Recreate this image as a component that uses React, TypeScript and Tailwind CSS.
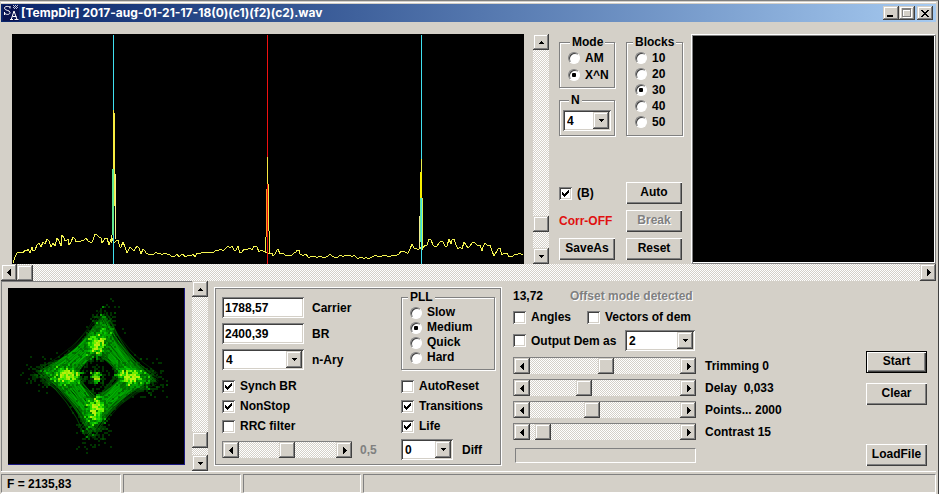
import { useState } from 'react';
import type { ReactNode } from 'react';
import clsx from 'clsx';

const SUNKEN =
  'shadow-[inset_1px_1px_#808080,inset_-1px_-1px_#fff,inset_2px_2px_#404040,inset_-2px_-2px_#d4d0c8]';
const RAISED =
  'bg-[#d4d0c8] shadow-[inset_-1px_-1px_#404040,inset_1px_1px_#d4d0c8,inset_-2px_-2px_#808080,inset_2px_2px_#fff]';
const ETCHED = 'border border-[#808080] shadow-[1px_1px_#fff,inset_1px_1px_#fff]';
const DITHER =
  'bg-[conic-gradient(#fff_25%,#d4d0c8_0_50%,#fff_0_75%,#d4d0c8_0)] bg-[length:2px_2px]';
const THUMB =
  '[&::-webkit-slider-thumb]:appearance-none [&::-webkit-slider-thumb]:size-4 [&::-webkit-slider-thumb]:bg-[#d4d0c8] [&::-webkit-slider-thumb]:shadow-[inset_-1px_-1px_#404040,inset_1px_1px_#d4d0c8,inset_-2px_-2px_#808080,inset_2px_2px_#fff]';

function makeRandom(seed: number) {
  let s = seed;
  return () => {
    s = (s * 1664525 + 1013904223) % 4294967296;
    return s / 4294967296;
  };
}

type Point = [number, number];

// noise floor anchors, x 0..512, y 0..230
const FLOOR: Point[] = [
  [1, 229], [5, 219], [11, 219], [16, 215], [21, 217], [25, 211], [29, 213], [35, 205], [39, 213],
  [41, 209], [43, 212], [45, 204], [49, 212], [50, 201], [53, 207], [56, 205], [57, 211], [61, 203],
  [64, 208], [70, 206], [76, 207], [81, 206], [85, 201], [90, 209], [93, 204], [97, 211], [100, 204],
  [104, 207], [106, 206], [109, 213], [111, 208], [116, 217], [123, 215], [134, 219], [145, 219],
  [155, 220], [161, 222], [175, 222], [188, 220], [200, 218], [210, 216], [218, 214], [222, 216],
  [226, 212], [230, 218], [236, 215], [245, 213], [249, 216], [253, 218], [258, 219], [261, 222],
  [266, 215], [268, 220], [278, 221], [285, 216], [288, 220], [298, 223], [320, 222], [340, 223],
  [360, 223], [375, 222], [385, 221], [391, 217], [396, 219], [400, 210], [403, 214], [408, 213],
  [411, 214], [415, 211], [419, 206], [423, 213], [429, 207], [433, 212], [440, 206], [448, 213],
  [454, 211], [460, 209], [466, 212], [471, 213], [476, 211], [483, 220], [486, 215], [491, 220],
  [501, 222], [511, 221],
];

function buildFloor() {
  const rand = makeRandom(11);
  const out: string[] = [];
  for (let i = 0; i < FLOOR.length - 1; i++) {
    const [x0, y0] = FLOOR[i];
    const [x1, y1] = FLOOR[i + 1];
    out.push(`${x0},${y0}`);
    for (let x = x0 + 2; x < x1; x += 2) {
      const jitter = y0 > 217 ? 4 : 8;
      out.push(`${x},${Math.round(y0 + ((y1 - y0) * (x - x0)) / (x1 - x0) + (rand() - 0.5) * jitter)}`);
    }
  }
  out.push('511,221');
  return out.join(' ');
}

const floorPoints = buildFloor();

function Spectrum() {
  return (
    <svg
      viewBox="0 0 512 230"
      preserveAspectRatio="none"
      shapeRendering="crispEdges"
      className="h-[230px] min-w-0 flex-1 bg-black"
      role="img"
      aria-label="Spectrum"
    >
      <polyline points={floorPoints} fill="none" stroke="#f4f450" strokeWidth="1" />
      <path d="M101 1h1v229h-1z" fill="#40e0f0" />
      <path d="M255 1h1v229h-1z" fill="#f01010" />
      <path d="M409 1h1v229h-1z" fill="#40e0f0" />

      <path d="M101 76h1v3h1v61h-2z" fill="#f8ec40" />
      <path d="M101 135h2v37h-2z" fill="#f8ec40" />
      <path d="M100 135h2v66h-2z" fill="#60e890" />
      <path d="M103 140h1v65h-1z" fill="#f0f090" />
      <path d="M99 201h1v8h-1z" fill="#f0f060" />

      <path d="M255 123h1v27h-1z" fill="#f8e840" />
      <path d="M256 150h1v47h-1z" fill="#f8e840" />
      <path d="M254 155h1v48h-1z" fill="#f89820" />
      <path d="M253 203h1v15h-1z" fill="#f8e840" />
      <path d="M257 197h1v22h-1z" fill="#f8e840" />

      <path d="M409 125h1v13h-1z" fill="#e8f050" />
      <path d="M408 138h2v26h-2z" fill="#f8f000" />
      <path d="M408 164h1v44h-1z" fill="#60e890" />
      <path d="M410 164h1v50h-1z" fill="#d0f050" />
      <path d="M407 182h1v32h-1z" fill="#f0f090" />
    </svg>
  );
}

const CENTER = 88;
const CLUSTERS = [
  { at: [88, 58], tip: [98, 24] },
  { at: [119, 87], tip: [148, 94] },
  { at: [87, 118], tip: [82, 150] },
  { at: [61, 87], tip: [27, 84] },
];
const SHADES = ['#005400', '#007c00', '#00a400', '#08c800', '#28e800', '#50f800', '#80ff00', '#b0ff00', '#d8ff10'];

function buildConstellation() {
  const rand = makeRandom(2017);
  const gauss = () => rand() + rand() + rand() + rand() - 2;
  const hits = new Map<string, number>();
  const hit = (x: number, y: number) => {
    const key = `${Math.round(x / 2) * 2} ${Math.round(y / 2) * 2}`;
    hits.set(key, (hits.get(key) ?? 0) + 1);
  };

  CLUSTERS.forEach(({ at, tip }) => {
    for (let i = 0; i < 480; i++) {
      const t = gauss() * 0.28 + 0.05;
      hit(
        at[0] + (tip[0] - at[0]) * t + gauss() * 8,
        at[1] + (tip[1] - at[1]) * t + gauss() * 8,
      );
    }
    for (let i = 0; i < 330; i++) {
      const t = rand() ** 1.6;
      const spread = 15 - t * 4;
      hit(
        at[0] + (tip[0] - at[0]) * t + gauss() * spread,
        at[1] + (tip[1] - at[1]) * t + gauss() * spread,
      );
    }
  });
  for (let i = 0; i < 120; i++) hit(CENTER + gauss() * 5, CENTER + gauss() * 5);
  for (let i = 0; i < 50; i++) hit(CENTER + gauss() * 12, CENTER + gauss() * 12);

  const dots = SHADES.map(() => '');
  hits.forEach((n, key) => {
    dots[Math.min(n, SHADES.length) - 1] += `M${key}h2v2h-2z`;
  });

  // each trail runs from one cluster to the next, bowed towards the middle
  const trails: string[] = [];
  CLUSTERS.forEach(({ at, tip }, i) => {
    const next = CLUSTERS[(i + 1) % 4];
    for (let k = 0; k < 170; k++) {
      const a = rand() ** 1.3 * 0.95 - 0.1;
      const b = Math.max(-0.1, Math.min(0.85, a + gauss() * 0.25));
      const x0 = at[0] + (tip[0] - at[0]) * a + gauss() * 6;
      const y0 = at[1] + (tip[1] - at[1]) * a + gauss() * 6;
      const x1 = next.at[0] + (next.tip[0] - next.at[0]) * b + gauss() * 6;
      const y1 = next.at[1] + (next.tip[1] - next.at[1]) * b + gauss() * 6;
      const bow = 0.02 + Math.max(0, a) * 0.26;
      const qx = (x0 + x1) / 2 + (CENTER - (x0 + x1) / 2) * bow;
      const qy = (y0 + y1) / 2 + (CENTER - (y0 + y1) / 2) * bow;
      trails.push(`M${x0.toFixed(1)} ${y0.toFixed(1)}Q${qx.toFixed(1)} ${qy.toFixed(1)} ${x1.toFixed(1)} ${y1.toFixed(1)}`);
    }
  });
  return { dots, trails };
}

const constellation = buildConstellation();

function Constellation() {
  return (
    <svg
      viewBox="0 0 176 176"
      className="box-content size-44 border-r border-b border-[#1c1880] bg-black"
      role="img"
      aria-label="Constellation"
    >
      <g fill="none" stroke="#00c800" strokeOpacity="0.2">
        {constellation.trails.map((d) => (
          <path key={d} d={d} />
        ))}
      </g>
      <g shapeRendering="crispEdges">
        {constellation.dots.map((d, i) => (
          <path key={SHADES[i]} d={d} fill={SHADES[i]} fillOpacity={i < 2 ? 0.6 : 0.85} />
        ))}
      </g>
    </svg>
  );
}

const ARROWS = {
  up: 'M3 0h1v1h1v1h1v1h-5v-1h1v-1h1z',
  down: 'M1 0h5v1h-1v1h-1v1h-1v-1h-1v-1h-1z',
  left: 'M3 0h1v7h-1v-1h-1v-1h-1v-1h-1v-1h1v-1h1v-1h1z',
  right: 'M1 0h1v1h1v1h1v1h1v1h-1v1h-1v1h-1v1h-1z',
};

function Arrow({ dir }: { dir: keyof typeof ARROWS }) {
  const flat = dir === 'up' || dir === 'down';
  return (
    <svg viewBox={flat ? '0 0 7 3' : '0 0 5 7'} className={flat ? 'h-[3px] w-[7px]' : 'h-[7px] w-[5px]'} shapeRendering="crispEdges" aria-hidden="true">
      <path d={ARROWS[dir]} />
    </svg>
  );
}

function ScrollBar({ label, value, vertical, framed, className }: {
  label: string;
  value: number;
  vertical?: boolean;
  framed?: boolean;
  className?: string;
}) {
  const [pos, setPos] = useState(value);
  const end = clsx('flex shrink-0 items-center justify-center', RAISED, vertical ? 'h-4 w-full' : 'h-full w-4');
  return (
    <div
      className={clsx(
        'flex',
        DITHER,
        vertical ? 'w-4 flex-col' : 'h-[17px]',
        framed && 'border-t border-l border-[#808080]',
        className,
      )}
    >
      <button type="button" aria-label={`${label} back`} className={end} onClick={() => setPos(Math.max(0, pos - 1))}>
        <Arrow dir={vertical ? 'up' : 'left'} />
      </button>
      <input
        type="range"
        aria-label={label}
        value={pos}
        onChange={(e) => setPos(Number(e.target.value))}
        className={clsx(
          'm-0 block min-h-0 min-w-0 flex-1 appearance-none bg-transparent',
          THUMB,
          vertical ? 'w-full [writing-mode:vertical-lr]' : 'h-full',
        )}
      />
      <button type="button" aria-label={`${label} forward`} className={end} onClick={() => setPos(Math.min(100, pos + 1))}>
        <Arrow dir={vertical ? 'down' : 'right'} />
      </button>
    </div>
  );
}

function Radio({ name, label, checked }: { name: string; label: string; checked?: boolean }) {
  return (
    <label className="flex items-center gap-[5px]">
      <span className="grid place-items-center">
        <input
          type="radio"
          name={name}
          defaultChecked={checked}
          className="peer col-start-1 row-start-1 size-3 appearance-none rounded-full border border-t-[#808080] border-r-white border-b-white border-l-[#808080] bg-white shadow-[inset_1px_1px_#404040]"
        />
        <span className="pointer-events-none col-start-1 row-start-1 hidden size-1 rounded-[1px] bg-black peer-checked:block" />
      </span>
      {label}
    </label>
  );
}

function Check({ label, checked, className }: { label: string; checked?: boolean; className?: string }) {
  return (
    <label className={clsx('flex items-center gap-[5px]', className)}>
      <span className="grid place-items-center">
        <input
          type="checkbox"
          defaultChecked={checked}
          className={clsx('peer col-start-1 row-start-1 size-[13px] appearance-none bg-white', SUNKEN)}
        />
        <svg
          viewBox="0 0 7 7"
          shapeRendering="crispEdges"
          className="pointer-events-none col-start-1 row-start-1 hidden size-[7px] peer-checked:block"
          aria-hidden="true"
        >
          <path d="M0 2h1v1h1v1h1v-1h1v-1h1v-1h1v-1h1v3h-1v1h-1v1h-1v1h-1v1h-1v-1h-1v-1h-1z" />
        </svg>
      </span>
      {label}
    </label>
  );
}

function Select({ id, label, value, options, className }: {
  id: string;
  label?: string;
  value: string;
  options: string[];
  className?: string;
}) {
  return (
    <span className={clsx('grid', className)}>
      <select
        id={id}
        aria-label={label}
        defaultValue={value}
        className={clsx('col-start-1 row-start-1 h-[21px] w-full appearance-none bg-white pl-1', SUNKEN)}
      >
        {options.map((o) => (
          <option key={o}>{o}</option>
        ))}
      </select>
      <span className={clsx('pointer-events-none col-start-1 row-start-1 mr-0.5 flex h-[17px] w-4 items-center justify-center self-center justify-self-end', RAISED)}>
        <Arrow dir="down" />
      </span>
    </span>
  );
}

function Group({ title, className, children }: { title: string; className?: string; children: ReactNode }) {
  return (
    <fieldset className={clsx('min-w-0', ETCHED, className)}>
      <legend className="bg-[#d4d0c8] px-0.5">{title}</legend>
      {children}
    </fieldset>
  );
}

function Button({ children, disabled, main, className }: {
  children: ReactNode;
  disabled?: boolean;
  main?: boolean;
  className?: string;
}) {
  return (
    <button
      type="button"
      disabled={disabled}
      className={clsx(
        'h-[22px] bg-[#d4d0c8] pb-0.5 disabled:text-[#808080] disabled:[text-shadow:1px_1px_#fff]',
        main
          ? 'border border-black shadow-[inset_1px_1px_#fff,inset_-1px_-1px_#404040,inset_-2px_-2px_#808080]'
          : 'shadow-[inset_1px_1px_#fff,inset_-1px_-1px_#404040,inset_-2px_-2px_#808080]',
        className,
      )}
    >
      {children}
    </button>
  );
}

function TitleBar() {
  const box = clsx('flex h-3.5 w-4 items-center justify-center', RAISED);
  return (
    <header className="flex h-[18px] items-center bg-linear-to-r from-[#0a246a] to-[#a6caf0] pr-[3px] pl-0.5 text-white">
      <svg viewBox="0 0 16 16" className="size-4 bg-[#0a1450]" aria-hidden="true">
        <g fill="none" stroke="#fff">
          <path d="M7 3.5V1M7 2.5C6 1 1.500 .8 1.500 3.200C1.500 5.800 7 4.800 7 7.500C7 10.200 2.500 9.800 1.500 8M1.500 10V7" />
          <path d="M7 14.500h3M11.500 14.500h4M8.200 14.500L11 6l3 8.500M9.500 11.500h4" />
        </g>
        <path
          d="M10 0h1v1h-1zM12 0h1v1h-1zM14 0h1v1h-1zM11 1h1v1h-1zM13 1h1v1h-1zM10 2h1v1h-1zM12 2h1v1h-1zM14 2h1v1h-1zM11 3h1v1h-1zM13 3h1v1h-1z"
          fill="#c0c8e0"
          shapeRendering="crispEdges"
        />
      </svg>
      <h1 className="ml-0.5 min-w-0 flex-1 truncate font-['Inter',sans-serif] text-[12px] leading-[18px] font-bold">
        [TempDir] 2017-aug-01-21-17-18(0)(c1)(f2)(c2).wav
      </h1>
      <button type="button" aria-label="Minimize" className={box}>
        <svg viewBox="0 0 8 8" className="size-2" aria-hidden="true">
          <path d="M0 6h6v2h-6z" fill="#000" />
        </svg>
      </button>
      <button type="button" aria-label="Maximize" disabled className={box}>
        <svg viewBox="0 0 10 10" className="size-2.5" shapeRendering="crispEdges" aria-hidden="true">
          <path d="M1 1h9v9h-9zM2 3v6h7v-6z" fill="#fff" fillRule="evenodd" />
          <path d="M0 0h9v9h-9zM1 2v6h7v-6z" fill="#808080" fillRule="evenodd" />
        </svg>
      </button>
      <button type="button" aria-label="Close" className={clsx(box, 'ml-0.5')}>
        <svg viewBox="0 0 8 7" className="h-[7px] w-2" shapeRendering="crispEdges" aria-hidden="true">
          <path d="M0 0h2v1h1v1h2v-1h1v-1h2v1h-1v1h-1v1h-1v1h1v1h1v1h1v1h-2v-1h-1v-1h-2v1h-1v1h-2v-1h1v-1h1v-1h1v-1h-1v-1h-1v-1h-1z" />
        </svg>
      </button>
    </header>
  );
}

const SLIDERS = [
  { name: 'Trimming', text: 'Trimming 0', value: 51 },
  { name: 'Delay', text: 'Delay  0,033', value: 34 },
  { name: 'Points', text: 'Points... 2000', value: 40 },
  { name: 'Contrast', text: 'Contrast 15', value: 4 },
];

const FIELD = 'h-[21px] w-[82px] bg-white pl-[3px]';

export default function App() {
  return (
    <div className="flex min-h-screen flex-col border-t border-r border-t-[#808080] border-r-[#404040] bg-[#d4d0c8] pr-0.5 pl-px font-['Liberation_Sans',Arial,sans-serif] text-[12px] leading-[14px] font-bold text-black">
      <div className="mt-px mb-px h-px bg-white" />
      <TitleBar />

      <main>
        <section className="flex pt-3 pl-[11px]">
          <Spectrum />
          <ScrollBar label="Level" value={91} vertical className="ml-[9px]" />

          <div className="ml-2.5 flex w-[124px] flex-col justify-between pt-px pb-1">
            <div className="flex gap-[11px]">
              <div className="flex w-14 flex-col gap-[5px]">
                <Group title="Mode" className="px-2 pb-1 [&>legend]:ml-0.5">
                  <div className="flex flex-col gap-px pt-px leading-4">
                    <Radio name="mode" label="AM" />
                    <Radio name="mode" label="X^N" checked />
                  </div>
                </Group>
                <Group title="N" className="px-[3px] pb-1 [&>legend]:ml-1.5">
                  <Select id="power" label="N" value="4" options={['2', '4', '8']} className="mt-[3px]" />
                </Group>
              </div>
              <Group title="Blocks" className="flex-1 pb-[5px] [&>legend]:ml-1.5">
                <div className="flex flex-col pt-px pl-2 leading-4">
                  {['10', '20', '30', '40', '50'].map((n) => (
                    <Radio key={n} name="blocks" label={n} checked={n === '30'} />
                  ))}
                </div>
              </Group>
            </div>

            <div className="grid grid-cols-[56px_56px] items-center gap-x-[11px] gap-y-1.5">
              <Check label="(B)" checked />
              <Button>Auto</Button>
              <span className="text-[#e01010]">Corr-OFF</span>
              <Button disabled>Break</Button>
              <Button>SaveAs</Button>
              <Button>Reset</Button>
            </div>
          </div>

          <div className="ml-2 w-[245px] border border-t-white border-r-[#808080] border-b-[#808080] border-l-white bg-black shadow-[inset_1px_1px_#808080,inset_-1px_-1px_#fff]" />
        </section>

        <ScrollBar label="Position" value={0} />

        <section className="flex border-b border-white">
          <div className="border-t border-l border-[#808080] py-1.5 pr-[7px] pl-1.5">
            <Constellation />
          </div>
          <ScrollBar label="Zoom" value={95} vertical />

          <div className="mt-1.5 mb-[5px] ml-1.5 flex w-72 justify-between border border-white pr-1.5 pb-1 pl-[7px] shadow-[inset_0_0_0_1px_#808080]">
            <div className="pt-[9px]">
              <div className="grid grid-cols-[82px_auto] items-center gap-x-2 gap-y-[5px]">
                <input id="carrier" defaultValue="1788,57" className={clsx(FIELD, SUNKEN)} />
                <label htmlFor="carrier">Carrier</label>
                <input id="br" defaultValue="2400,39" className={clsx(FIELD, SUNKEN)} />
                <label htmlFor="br">BR</label>
                <Select id="nary" value="4" options={['2', '4', '8', '16']} />
                <label htmlFor="nary">n-Ary</label>
              </div>
              <div className="mt-1.5 flex flex-col leading-5">
                <Check label="Synch BR" checked />
                <Check label="NonStop" checked />
                <Check label="RRC filter" />
              </div>
              <div className="mt-[5px] flex items-center gap-2">
                <ScrollBar label="RRC factor" value={49} framed className="w-[130px]" />
                <span className="text-[#808080]">0,5</span>
              </div>
            </div>

            <div className="w-[94px] pt-0.5">
              <Group title="PLL" className="pb-1 [&>legend]:ml-1.5">
                <div className="flex flex-col pt-px pl-2 leading-[15px]">
                  <Radio name="pll" label="Slow" />
                  <Radio name="pll" label="Medium" checked />
                  <Radio name="pll" label="Quick" />
                  <Radio name="pll" label="Hard" />
                </div>
              </Group>
              <div className="mt-1.5 flex flex-col leading-5">
                <Check label="AutoReset" />
                <Check label="Transitions" checked />
                <Check label="Life" checked />
              </div>
              <div className="mt-[3px] flex items-center gap-[9px]">
                <Select id="diff" value="0" options={['0', '1', '2']} className="w-[52px]" />
                <label htmlFor="diff">Diff</label>
              </div>
            </div>
          </div>

          <div className="ml-[11px] flex-1 pt-2">
            <div className="flex">
              <span className="w-[57px]">13,72</span>
              <span className="text-[#808080] [text-shadow:1px_1px_#fff]">Offset mode detected</span>
            </div>
            <div className="mt-[7px] flex">
              <Check label="Angles" className="w-[74px]" />
              <Check label="Vectors of dem" />
            </div>
            <div className="mt-1.5 flex items-center">
              <Check label="Output Dem as" className="w-28" />
              <Select id="output" label="Output" value="2" options={['1', '2', '3']} className="w-[70px]" />
            </div>
            <div className="mt-1.5 flex flex-col gap-[5px]">
              {SLIDERS.map((s) => (
                <div key={s.name} className="flex items-center gap-[9px]">
                  <ScrollBar label={s.name} value={s.value} framed className="w-[183px]" />
                  <span className="whitespace-pre">{s.text}</span>
                </div>
              ))}
            </div>
            <div className="mt-2 ml-0.5 h-[15px] w-[181px] border border-t-[#808080] border-r-white border-b-white border-l-[#808080]" />
          </div>

          <div className="flex w-[70px] flex-col pt-[70px] pr-[9px] pb-[5px]">
            <Button main>Start</Button>
            <Button className="mt-2.5">Clear</Button>
            <Button className="mt-auto">LoadFile</Button>
          </div>
        </section>
      </main>

      <footer className="mt-auto flex gap-0.5 border-b border-white pt-0.5 [&>div]:h-[19px] [&>div]:border [&>div]:border-t-[#808080] [&>div]:border-r-white [&>div]:border-b-white [&>div]:border-l-[#808080]">
        <div className="w-[120px] pt-0.5 pl-[5px]">F = 2135,83</div>
        <div className="w-[118px]" />
        <div className="w-[118px]" />
        <div className="flex-1" />
      </footer>
    </div>
  );
}
